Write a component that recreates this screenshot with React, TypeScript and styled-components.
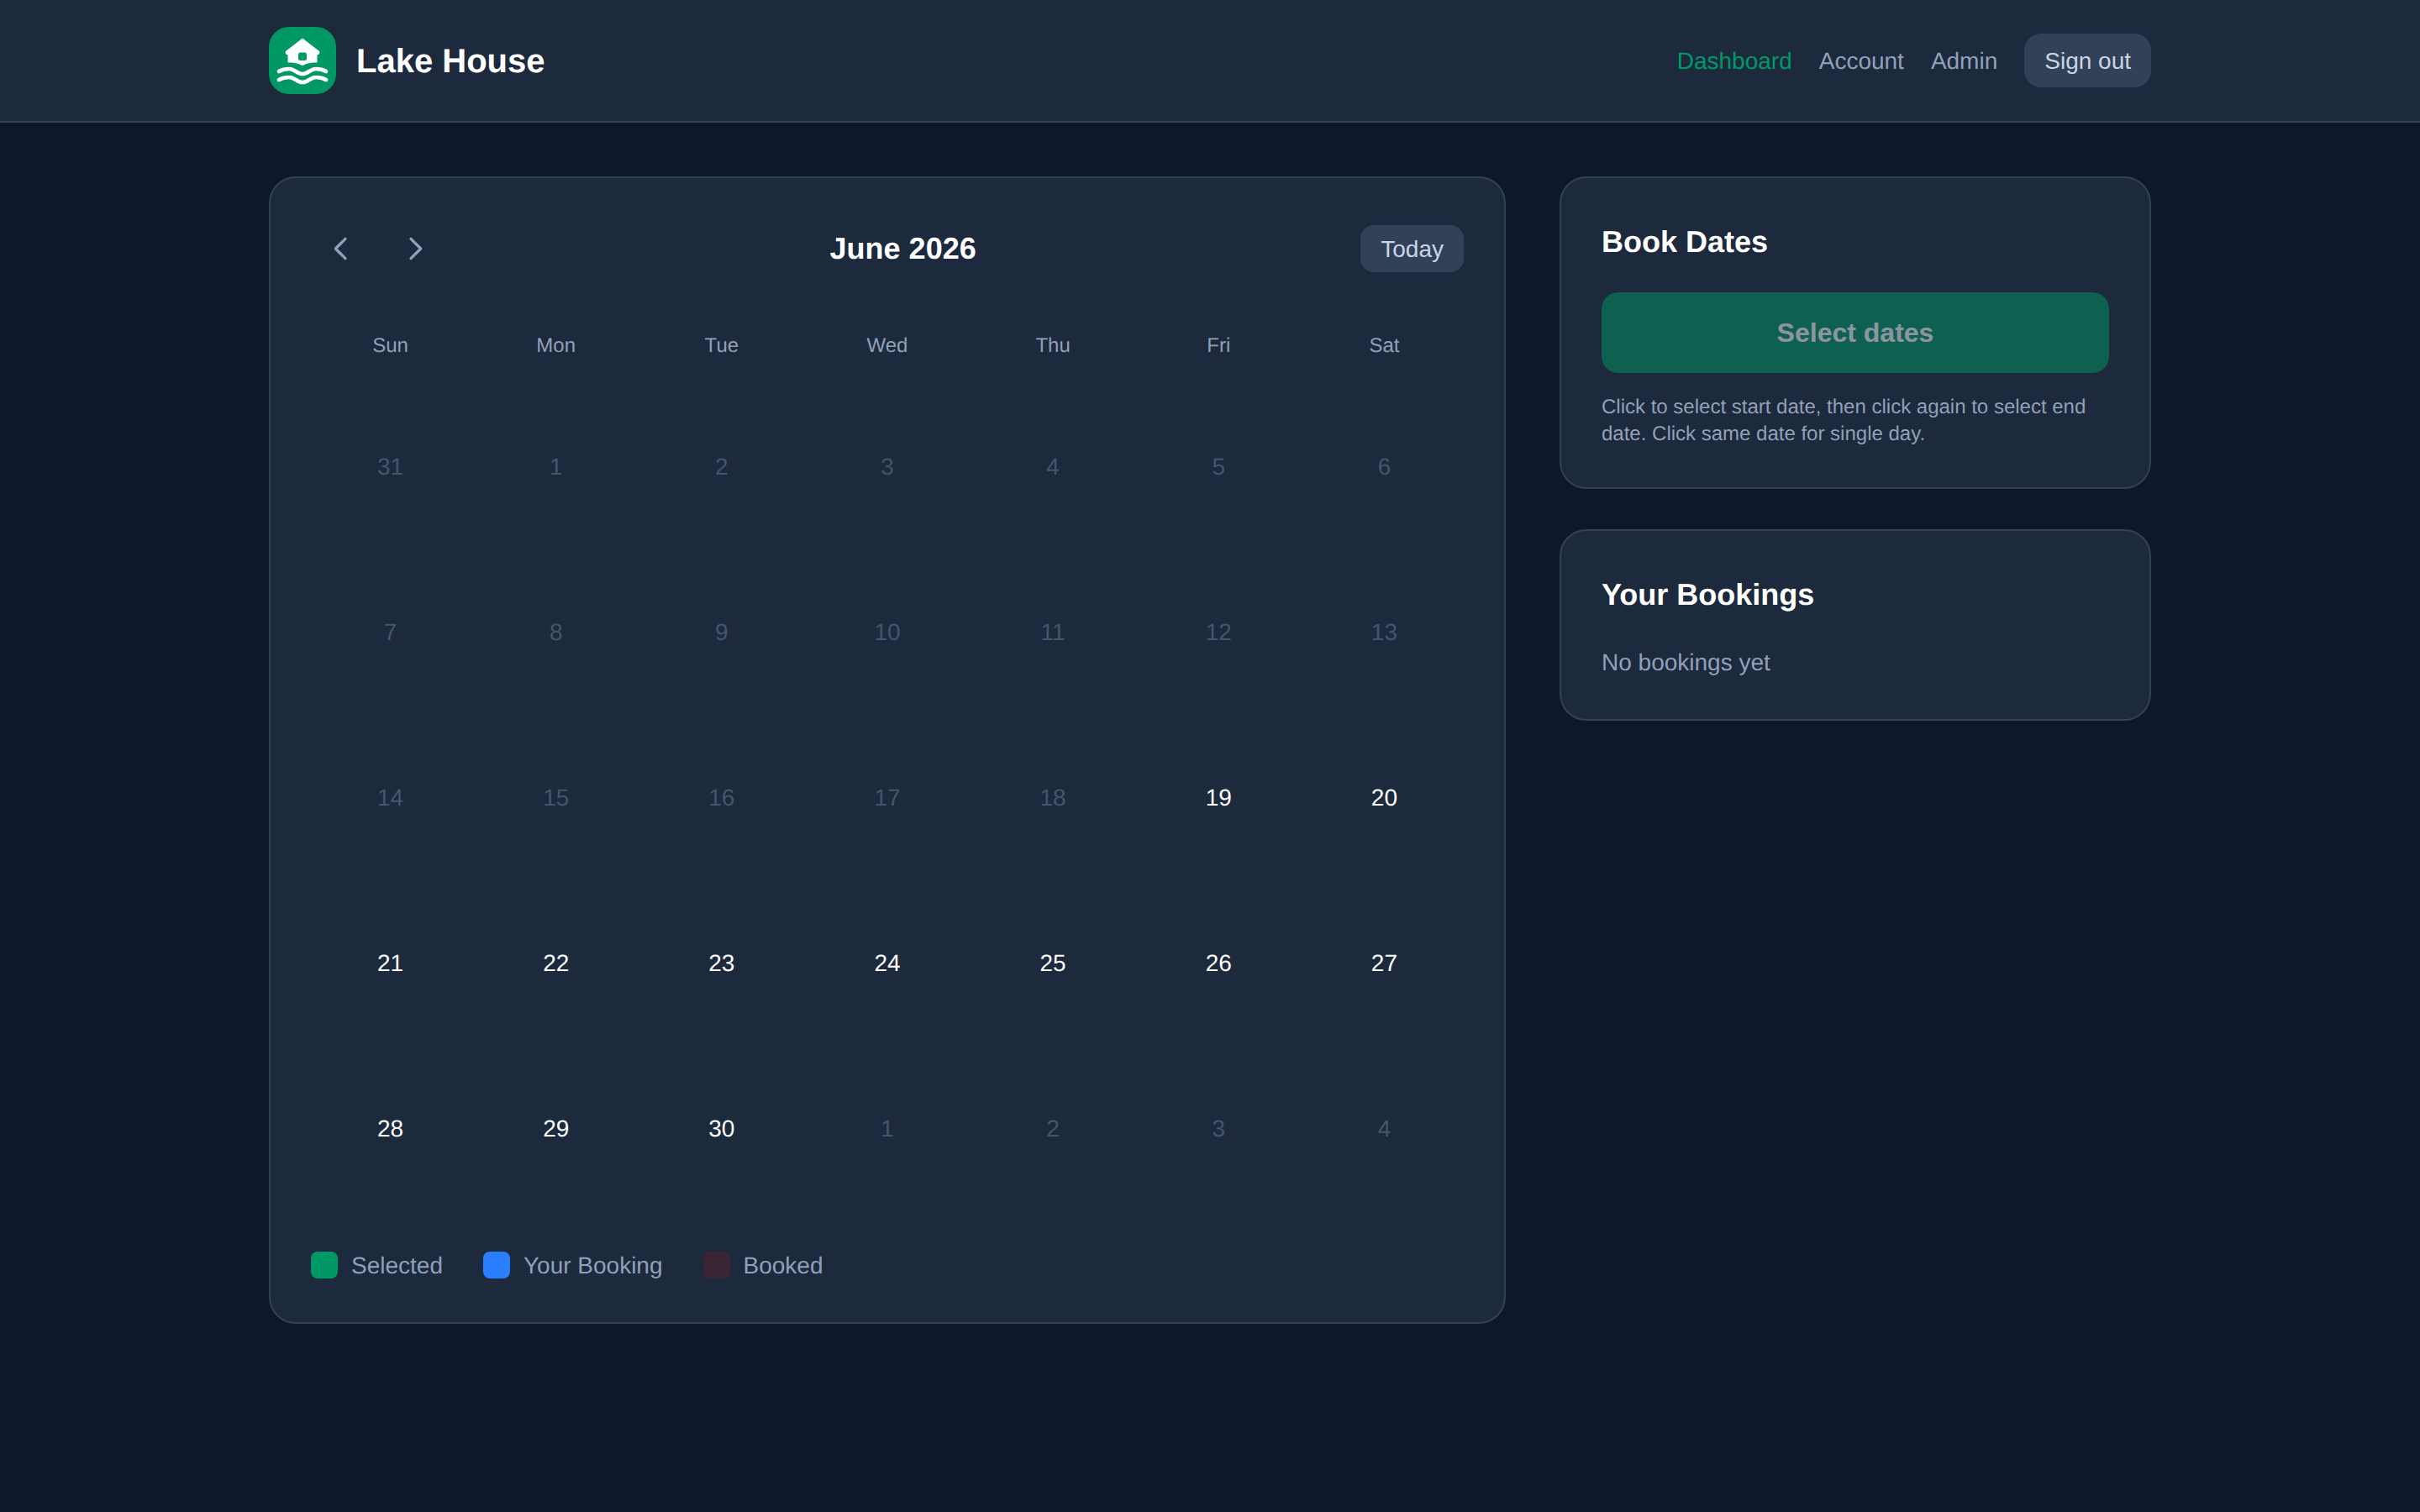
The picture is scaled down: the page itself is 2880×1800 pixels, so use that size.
import styled, { createGlobalStyle } from "styled-components";

const GlobalStyle = createGlobalStyle`
  * {
    box-sizing: border-box;
  }
  body {
    margin: 0;
    background: #0f172b;
    font-family: "Liberation Sans", Arial, sans-serif;
    text-rendering: geometricPrecision;
  }
`;

const weekdays = ["Sun", "Mon", "Tue", "Wed", "Thu", "Fri", "Sat"];

const days = [
  ...[31, 1, 2, 3, 4, 5, 6, 7, 8, 9, 10, 11, 12, 13, 14, 15, 16, 17, 18].map((n) => ({ n, muted: true })),
  ...[19, 20, 21, 22, 23, 24, 25, 26, 27, 28, 29, 30].map((n) => ({ n, muted: false })),
  ...[1, 2, 3, 4].map((n) => ({ n, muted: true })),
];

const legend = [
  { label: "Selected", color: "#009966" },
  { label: "Your Booking", color: "#2b7fff" },
  { label: "Booked", color: "#3b2433" },
];

function LakeLogo() {
  return (
    <svg width="80" height="80" viewBox="0 0 80 80" fill="none">
      <path
        d="M40 14 L60 29.5 Q60.5 33 57 33 L57 42 Q47 41.5 40 45.7 Q33 41.5 23 42 L23 33 Q19.5 33 20 29.5 Z"
        fill="#fff"
        stroke="#fff"
        strokeWidth="1"
        strokeLinejoin="round"
      />
      <rect x="35" y="30.5" width="10" height="9.5" rx="2.5" fill="#009966" />
      <path
        d="M12 53 C15.5 51 19 50 24 50 C31 50 33 56 40 56 C47 56 49 50 56 50 C61 50 64.5 51 68 53"
        stroke="#fff"
        strokeWidth="4.6"
        strokeLinecap="round"
      />
      <path
        d="M12 63 C15.5 61 19 60 24 60 C31 60 33 66 40 66 C47 66 49 60 56 60 C61 60 64.5 61 68 63"
        stroke="#fff"
        strokeWidth="4.6"
        strokeLinecap="round"
      />
    </svg>
  );
}

function Chevron({ d }: { d: string }) {
  return (
    <svg width="40" height="40" viewBox="0 0 24 24" fill="none" stroke="currentColor" strokeWidth="2" strokeLinecap="round" strokeLinejoin="round">
      <path d={d} />
    </svg>
  );
}

export default function App() {
  return (
    <>
      <GlobalStyle />
      <Page>
        <Header>
          <Brand>
            <LogoBox>
              <LakeLogo />
            </LogoBox>
            <BrandName>Lake House</BrandName>
          </Brand>
          <Nav>
            <NavLink $active>Dashboard</NavLink>
            <NavLink>Account</NavLink>
            <NavLink>Admin</NavLink>
            <SignOut>Sign out</SignOut>
          </Nav>
        </Header>
        <Main>
          <Card>
            <CalendarHead>
              <ArrowGroup>
                <ArrowButton aria-label="Previous month">
                  <Chevron d="M15 19l-7-7 7-7" />
                </ArrowButton>
                <ArrowButton aria-label="Next month">
                  <Chevron d="M9 5l7 7-7 7" />
                </ArrowButton>
              </ArrowGroup>
              <MonthTitle>June 2026</MonthTitle>
              <TodayButton>Today</TodayButton>
            </CalendarHead>
            <WeekRow>
              {weekdays.map((d) => (
                <Weekday key={d}>{d}</Weekday>
              ))}
            </WeekRow>
            <DayGrid>
              {days.map((d, i) => (
                <Day key={i} $muted={d.muted}>
                  {d.n}
                </Day>
              ))}
            </DayGrid>
            <Legend>
              {legend.map((l) => (
                <LegendItem key={l.label}>
                  <Swatch $color={l.color} />
                  <LegendLabel>{l.label}</LegendLabel>
                </LegendItem>
              ))}
            </Legend>
          </Card>
          <Side>
            <Card>
              <CardTitle>Book Dates</CardTitle>
              <BookButton disabled>Select dates</BookButton>
              <Hint>Click to select start date, then click again to select end date. Click same date for single day.</Hint>
            </Card>
            <Card>
              <CardTitle>Your Bookings</CardTitle>
              <Empty>No bookings yet</Empty>
            </Card>
          </Side>
        </Main>
      </Page>
    </>
  );
}

const Page = styled.div`
  min-height: 100vh;
  background: #0f172b;
`;

const Header = styled.header`
  height: 146px;
  padding: 0 320px;
  display: flex;
  align-items: center;
  justify-content: space-between;
  background: #1d293d;
  border-bottom: 2px solid #314158;
`;

const Brand = styled.div`
  display: flex;
  align-items: center;
  gap: 24px;
`;

const LogoBox = styled.div`
  width: 80px;
  height: 80px;
  border-radius: 24px;
  background: #009966;
`;

const BrandName = styled.span`
  padding-top: 2px;
  font-size: 40px;
  line-height: 56px;
  font-weight: 700;
  color: #fff;
`;

const Nav = styled.nav`
  display: flex;
  align-items: center;
  gap: 32px;
`;

const NavLink = styled.a<{ $active?: boolean }>`
  padding-top: 2px;
  font-size: 28px;
  line-height: 40px;
  color: ${(p) => (p.$active ? "#009966" : "#90a1b9")};
`;

const SignOut = styled.button`
  height: 64px;
  padding: 2px 24px 0;
  border: 0;
  border-radius: 20px;
  background: #314158;
  color: #cad5e2;
  font: inherit;
  font-size: 28px;
  line-height: 40px;
`;

const Main = styled.main`
  padding: 64px 320px;
  display: grid;
  grid-template-columns: 1472px 704px;
  gap: 64px;
  align-items: start;
`;

const Side = styled.div`
  display: flex;
  flex-direction: column;
  gap: 48px;
`;

const Card = styled.section`
  padding: 48px;
  background: #1d293d;
  border: 2px solid #314158;
  border-radius: 32px;
`;

const CalendarHead = styled.div`
  display: flex;
  align-items: center;
  justify-content: space-between;
  margin-bottom: 48px;
`;

const ArrowGroup = styled.div`
  display: flex;
  gap: 16px;
`;

const ArrowButton = styled.button`
  padding: 16px;
  border: 0;
  background: none;
  color: #90a1b9;
  display: flex;
`;

const MonthTitle = styled.h2`
  margin: 0;
  font-size: 36px;
  line-height: 56px;
  font-weight: 700;
  color: #fff;
`;

const TodayButton = styled.button`
  height: 56px;
  padding: 2px 24px 0;
  border: 0;
  border-radius: 16px;
  background: #314158;
  color: #cad5e2;
  font: inherit;
  font-size: 28px;
  line-height: 40px;
`;

const WeekRow = styled.div`
  display: grid;
  grid-template-columns: repeat(7, 1fr);
  gap: 8px;
  margin-bottom: 16px;
`;

const Weekday = styled.div`
  padding: 16px 0;
  font-size: 24px;
  line-height: 32px;
  text-align: center;
  color: #90a1b9;
`;

const DayGrid = styled.div`
  display: grid;
  grid-template-columns: repeat(7, 1fr);
  gap: 8px;
`;

const Day = styled.div<{ $muted: boolean }>`
  aspect-ratio: 1;
  padding-top: 2px;
  display: flex;
  align-items: center;
  justify-content: center;
  font-size: 28px;
  line-height: 40px;
  color: ${(p) => (p.$muted ? "#45556c" : "#fff")};
`;

const Legend = styled.div`
  display: flex;
  gap: 48px;
  margin-top: 48px;
`;

const LegendItem = styled.div`
  display: flex;
  align-items: center;
  gap: 16px;
  height: 40px;
`;

const LegendLabel = styled.span`
  padding-top: 2px;
  font-size: 28px;
  line-height: 40px;
  color: #90a1b9;
`;

const Swatch = styled.span<{ $color: string }>`
  width: 32px;
  height: 32px;
  border-radius: 8px;
  background: ${(p) => p.$color};
`;

const CardTitle = styled.h2`
  margin: 0 0 32px;
  font-size: 36px;
  line-height: 56px;
  font-weight: 700;
  color: #fff;
`;

const BookButton = styled.button`
  display: block;
  width: 100%;
  height: 96px;
  border: 0;
  border-radius: 20px;
  background: #009966;
  color: #fff;
  font: inherit;
  font-size: 32px;
  line-height: 48px;
  font-weight: 700;
  opacity: 0.5;
`;

const Hint = styled.p`
  margin: 24px 0 0;
  height: 64px;
  font-size: 24px;
  line-height: 32px;
  padding-top: 1px;
  color: #90a1b9;
`;

const Empty = styled.p`
  margin: 0;
  height: 40px;
  padding-top: 1px;
  font-size: 28px;
  line-height: 40px;
  color: #90a1b9;
`;
